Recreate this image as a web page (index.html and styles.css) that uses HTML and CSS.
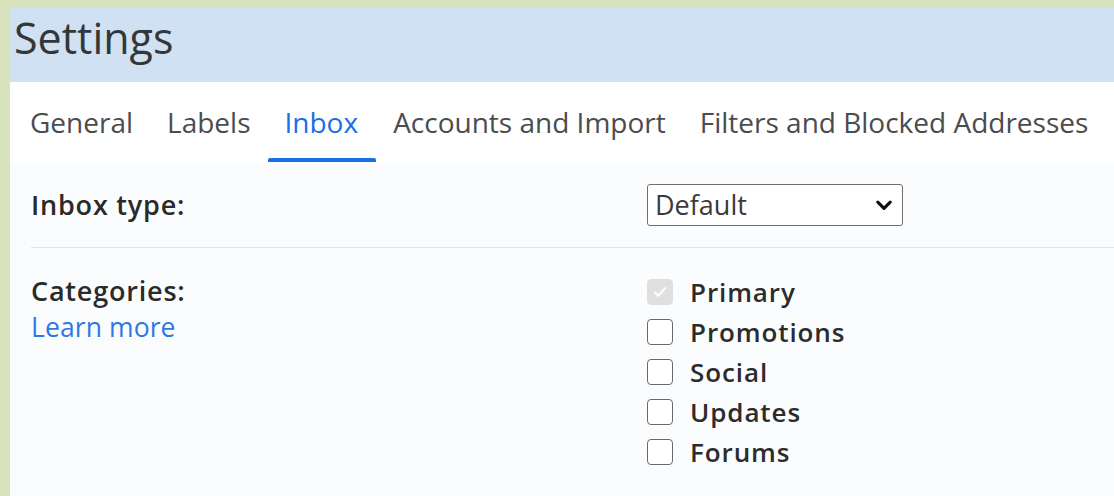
FILE: index.html
```html
<!DOCTYPE html>
<html lang="en">
<head>
<meta charset="utf-8">
<title>Settings</title>
<link rel="stylesheet" href="styles.css">
</head>
<body>
<div class="frame">
  <header class="title-bar">
    <h1 class="title">Settings</h1>
  </header>
  <nav class="tabs">
    <a class="tab">General</a>
    <a class="tab">Labels</a>
    <a class="tab active">Inbox</a>
    <a class="tab">Accounts and Import</a>
    <a class="tab">Filters and Blocked Addresses</a>
  </nav>
  <main class="panel">
    <section class="row row-type">
      <div class="label">Inbox type:</div>
      <div class="value">
        <div class="select">
          <span>Default</span>
          <svg class="chevron" viewBox="0 0 16 16" width="18" height="18"><path d="M2.5 5.5 8 11l5.5-5.5" fill="none" stroke="#111" stroke-width="2.8" stroke-linecap="round" stroke-linejoin="round"/></svg>
        </div>
      </div>
    </section>
    <section class="row row-cats">
      <div class="label">
        <div>Categories:</div>
        <a class="link">Learn more</a>
      </div>
      <ul class="value checks">
        <li><span class="box disabled"><svg viewBox="0 0 26 26" width="26" height="26"><path d="M7 13.5l4 4 8-9" fill="none" stroke="#fff" stroke-width="2.4" stroke-linecap="round" stroke-linejoin="round"/></svg></span>Primary</li>
        <li><span class="box"></span>Promotions</li>
        <li><span class="box"></span>Social</li>
        <li><span class="box"></span>Updates</li>
        <li><span class="box"></span>Forums</li>
      </ul>
    </section>
  </main>
</div>
</body>
</html>
```

FILE: styles.css
```css
html, body {
  margin: 0;
  padding: 0;
  height: 100%;
}

body {
  background: #d7e3bd;
  font-family: "Open Sans", Roboto, "Liberation Sans", sans-serif;
  color: #1f1f1f;
  overflow: hidden;
}

.frame {
  margin: 8px 0 0 10px;
  height: calc(100% - 8px);
  display: flex;
  flex-direction: column;
  background: #fbfcfd;
}

.title-bar {
  background: #cfe1f2;
  height: 74px;
  display: flex;
  align-items: center;
  padding-left: 4px;
}

.title {
  margin: 0;
  font-weight: 400;
  font-size: 43px;
  color: #353637;
  letter-spacing: 0;
  line-height: 1;
  transform: translateY(-8px);
}

.tabs {
  background: #fff;
  height: 80px;
  display: flex;
  align-items: stretch;
  padding-left: 3px;
}

.tab {
  display: flex;
  align-items: center;
  padding: 0 17px;
  font-size: 28px;
  color: #4a4c4e;
  position: relative;
  white-space: nowrap;
}

.tab.active {
  color: #1a6ee6;
  padding: 0 18px 0 17px;
}

.tab.active::after {
  content: "";
  position: absolute;
  left: 0;
  right: 0;
  bottom: 0;
  height: 4px;
  background: #1b6fe6;
  border-radius: 2px 2px 0 0;
}

.panel {
  flex: 1;
  padding: 0 0 0 21px;
}

.row {
  display: flex;
  border-bottom: 1px solid #e2e3e5;
}

.row-cats {
  border-bottom: none;
  padding-top: 24px;
}

.row-type {
  height: 85px;
  align-items: center;
}

.label {
  width: 617px;
  font-size: 27px;
  font-weight: 600;
  letter-spacing: 0.8px;
  color: #2a2a2a;
}

.label .link {
  display: block;
  font-weight: 400;
  font-size: 26.5px;
  letter-spacing: 0.1px;
  color: #2f78e3;
  margin-top: 0;
}

.select {
  width: 256px;
  height: 42px;
  margin-left: -1px;
  box-sizing: border-box;
  border: 1px solid #6f6f6f;
  border-radius: 3px;
  background: #fff;
  display: flex;
  align-items: center;
  justify-content: space-between;
  padding: 0 9px 0 7px;
  font-size: 27px;
  color: #3a3a3a;
}

.checks {
  list-style: none;
  margin: 0;
  padding: 0;
}

.checks li {
  display: flex;
  align-items: center;
  height: 40px;
  font-size: 26px;
  font-weight: 600;
  letter-spacing: 0.9px;
  color: #2c2c2c;
}

.box {
  width: 24px;
  height: 24px;
  border: 1px solid #6a6a6a;
  border-radius: 4px;
  background: #fff;
  margin-left: -1px;
  margin-right: 17px;
  display: flex;
  align-items: center;
  justify-content: center;
  flex: none;
}

.box.disabled {
  border-color: #e0e0e0;
  background: #e0e0e0;
}

.box svg {
  width: 22px;
  height: 22px;
}
```
